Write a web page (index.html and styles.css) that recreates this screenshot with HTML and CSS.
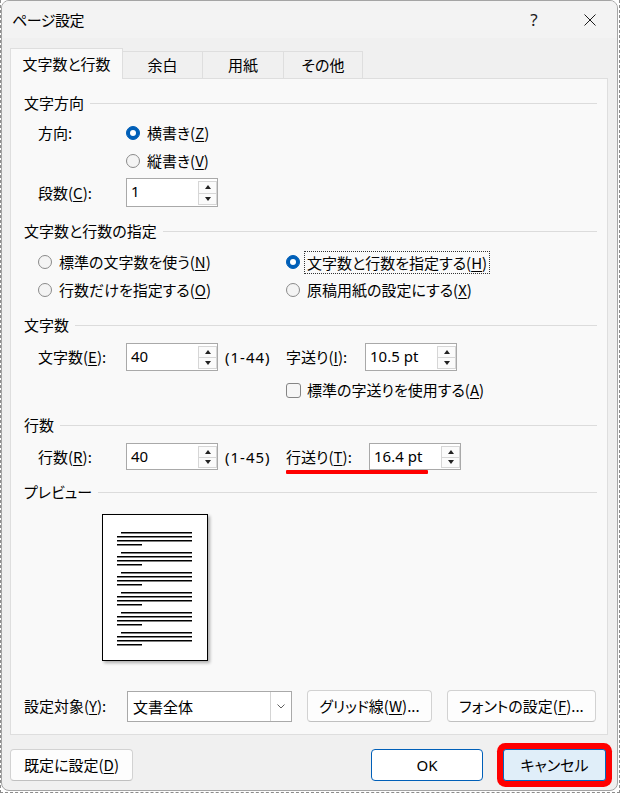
FILE: index.html
```html
<!doctype html>
<html lang="ja">
<head>
<meta charset="utf-8">
<title>ページ設定</title>
<link rel="stylesheet" href="styles.css">
</head>
<body>
<div class="desk">
	<div class="dlg">
		<div class="titlebar">
			<span class="ttl">ページ設定</span>
			<span class="help">?</span>
			<span class="close"><svg width="12" height="12" viewBox="0 0 12 12"><path d="M0.5 0.5L11.5 11.5M11.5 0.5L0.5 11.5" stroke="#1b1b1b" stroke-width="1"/></svg></span>
		</div>
		<div class="tabs">
			<div class="tab on">文字数と行数</div>
			<div class="tab">余白</div>
			<div class="tab">用紙</div>
			<div class="tab">その他</div>
		</div>
		<div class="panel">
			<div class="grp g1">文字方向</div>
			<div class="row r_dir">
				<span class="lbl">方向:</span>
				<span class="opt"><i class="radio on"></i>横書き(<u>Z</u>)</span>
			</div>
			<div class="row r_tate">
				<span class="opt"><i class="radio"></i>縦書き(<u>V</u>)</span>
			</div>
			<div class="row r_dan">
				<span class="lbl">段数(<u>C</u>):</span>
				<div class="spin tall"><span class="val">1</span><span class="arr"><b class="up"></b><b class="dn"></b></span></div>
			</div>

			<div class="grp g2">文字数と行数の指定</div>
			<div class="row r_opt1">
				<span class="opt col"><i class="radio"></i>標準の文字数を使う(<u>N</u>)</span>
				<span class="opt"><i class="radio on"></i><span class="focus">文字数と行数を指定する(<u>H</u>)</span></span>
			</div>
			<div class="row">
				<span class="opt col"><i class="radio"></i>行数だけを指定する(<u>O</u>)</span>
				<span class="opt"><i class="radio"></i>原稿用紙の設定にする(<u>X</u>)</span>
			</div>

			<div class="grp g3">文字数</div>
			<div class="row r_num">
				<span class="lbl">文字数(<u>E</u>):</span>
				<div class="spin"><span class="val">40</span><span class="arr"><b class="up"></b><b class="dn"></b></span></div>
				<span class="rng">(1-44)</span>
				<span class="lbl2">字送り(<u>I</u>):</span>
				<div class="spin"><span class="val">10.5 pt</span><span class="arr"><b class="up"></b><b class="dn"></b></span></div>
			</div>
			<div class="row r_chk">
				<span class="opt"><i class="chk"></i>標準の字送りを使用する(<u>A</u>)</span>
			</div>

			<div class="grp g3">行数</div>
			<div class="row r_num r_line">
				<span class="lbl">行数(<u>R</u>):</span>
				<div class="spin"><span class="val">40</span><span class="arr"><b class="up"></b><b class="dn"></b></span></div>
				<span class="rng">(1-45)</span>
				<span class="lbl3">行送り(<u>T</u>):</span>
				<div class="spin"><span class="val">16.4 pt</span><span class="arr"><b class="up"></b><b class="dn"></b></span></div>
				<span class="mark"></span>
			</div>

			<div class="grp g5">プレビュー</div>
			<div class="pv">
				<div class="page">
					<svg width="104" height="145" viewBox="0 0 104 145">
						<g fill="#000">
							<rect x="18" y="17" width="71" height="1.5"/><rect x="14" y="21" width="75" height="1.5"/><rect x="14" y="25" width="75" height="1.5"/><rect x="14" y="29" width="25" height="1.5"/>
							<rect x="18" y="37" width="71" height="1.5"/><rect x="14" y="41" width="75" height="1.5"/><rect x="14" y="45" width="75" height="1.5"/><rect x="14" y="49" width="25" height="1.5"/>
							<rect x="18" y="57" width="71" height="1.5"/><rect x="14" y="61" width="75" height="1.5"/><rect x="14" y="65" width="75" height="1.5"/><rect x="14" y="69" width="25" height="1.5"/>
							<rect x="18" y="77" width="71" height="1.5"/><rect x="14" y="81" width="75" height="1.5"/><rect x="14" y="85" width="75" height="1.5"/><rect x="14" y="89" width="25" height="1.5"/>
							<rect x="18" y="97" width="71" height="1.5"/><rect x="14" y="101" width="75" height="1.5"/><rect x="14" y="105" width="75" height="1.5"/><rect x="14" y="109" width="25" height="1.5"/>
							<rect x="18" y="117" width="71" height="1.5"/><rect x="14" y="121" width="75" height="1.5"/><rect x="14" y="125" width="75" height="1.5"/><rect x="14" y="129" width="25" height="1.5"/>
						</g>
					</svg>
				</div>
			</div>

			<div class="row r_apply">
				<span class="lbl4">設定対象(<u>Y</u>):</span>
				<div class="combo"><span class="val">文書全体</span><span class="drop"><svg width="8" height="5" viewBox="0 0 8 5"><path d="M0.5 0.5L4 4L7.5 0.5" fill="none" stroke="#606060" stroke-width="1"/></svg></span></div>
				<span class="btn b_grid">グリッド線(<u>W</u>)...</span>
				<span class="btn b_font">フォントの設定(<u>F</u>)...</span>
			</div>
		</div>
		<div class="foot">
			<span class="btn b_def">既定に設定(<u>D</u>)</span>
			<span class="btn b_ok">OK</span>
			<span class="btn b_cancel">キャンセル</span>
		</div>
	</div>
</div>
</body>
</html>
```

FILE: styles.css
```css
*{margin:0; padding:0; box-sizing:border-box;}
body{background:#fff; font-family:"Noto Sans CJK JP", sans-serif; font-size:15px; color:#000; font-feature-settings:"palt";}
u{text-decoration:underline; text-underline-offset:2px;}

.desk{width:620px; height:793px; border:1px dashed #8c8c8c; border-top:0; padding:0 1px 1px 0;}
.dlg{width:617px; height:791px; background:#f0f0f0; border:1px solid #a4a4a4; border-radius:8px; overflow:hidden;}

.titlebar{height:37px; display:flex; align-items:center; padding-left:10px; background:#f3f3f3;}
.titlebar .ttl{flex:1; line-height:37px; letter-spacing:-0.5px;}
.titlebar .help{width:46px; text-align:center; font-family:"Noto Sans", sans-serif; font-size:17px; line-height:37px; color:#1b1b1b;}
.titlebar .close{width:46px; margin:0 4px 0 10px; display:flex; justify-content:center; align-items:center;}

.tabs{display:flex; align-items:flex-end; height:30px; margin-top:10px; padding-left:8px; position:relative; z-index:1;}
.tab{height:27px; margin-left:-1px; border:1px solid #dedede; border-bottom:0; background:#f0f0f0; text-align:center; line-height:26px;}
.tab:nth-child(1){width:113px; margin-left:0;}
.tab:nth-child(2){width:81px;}
.tab:nth-child(3){width:82px;}
.tab:nth-child(4){width:80px;}
.tab.on{height:31px; margin-bottom:-1px; background:#f9f9f9; line-height:30px;}

.panel{width:598px; height:657px; margin-left:8px; border:1px solid #dedede; background:#f9f9f9; display:flex; flex-direction:column; padding-bottom:12px;}

.grp{display:flex; align-items:center; height:22px; padding:0 10px 0 13px; line-height:22px;}
.grp::after{content:""; flex:1; height:1px; background:#dcdcdc; margin-left:6px;}
.g1{margin-top:13px;}
.g2{margin-top:13px;}
.g3{margin-top:10px;}
.g5{margin-top:11px;}

.row{display:flex; align-items:center; height:28px; padding-left:27px; line-height:22px; white-space:nowrap;}
.lbl{width:88px;}
.r_dir{margin-top:5px;}
.r_tate{padding-left:115px;}
.r_dan{margin-top:3px; height:29px;}
.r_opt1{margin-top:6px;}
.r_num{margin-top:7px;}
.r_chk{margin-top:5px; padding-left:275px;}
.r_line{height:27px; position:relative;}

.opt{display:flex; align-items:center;}
.opt.col{width:248px;}
.radio{display:inline-block; width:14px; height:14px; border:1px solid #8a8a8a; border-radius:50%; background:#f4f4f4; margin-right:7px; position:relative;}
.radio.on{background:#005fb8; border-color:#005fb8;}
.radio.on::after{content:""; position:absolute; left:3px; top:3px; width:6px; height:6px; border-radius:50%; background:#fff;}
.focus{border:1px dotted #333; padding:0 2px; margin-left:-3px; line-height:21px;}
.chk{display:inline-block; width:15px; height:15px; border:1px solid #858585; border-radius:3px; background:#f6f6f6; margin-right:6px;}

.spin{display:flex; width:92px; height:28px; border:1px solid #a9a9a9; background:#fff;}
.spin.tall{height:29px;}
.r_line .spin{height:27px;}
.spin .val{flex:1; padding-left:4px; line-height:25px; font-family:"Noto Sans", sans-serif; font-size:15px;}
.spin .arr{width:19px; margin:2px 0 1px; display:flex; flex-direction:column; border:1px solid #d6d6d6; background:#fbfbfb;}
.spin .arr b{flex:1; display:flex; align-items:center; justify-content:center;}
.spin .arr .dn{border-top:1px solid #d6d6d6;}
.spin .arr .up::before{content:""; border-left:3.5px solid transparent; border-right:3.5px solid transparent; border-bottom:4px solid #222;}
.spin .arr .dn::before{content:""; border-left:3.5px solid transparent; border-right:3.5px solid transparent; border-top:4px solid #222;}
.rng{width:61px; margin-left:7px; font-family:"Noto Sans", sans-serif; letter-spacing:1px;}
.lbl2{width:79px;}
.lbl3{width:83px;}
.mark{position:absolute; left:275px; top:27px; width:142px; height:4px; background:#f00; border-radius:1px;}

.pv{margin-top:11px; padding-left:91px;}
.page{width:106px; height:147px; border:1px solid #000; background:#fff; box-shadow:2px 2px 3px rgba(0,0,0,.3);}
.page svg{display:block;}

.r_apply{margin-top:auto; height:32px; padding-left:13px;}
.lbl4{width:103px;}
.combo{display:flex; width:165px; height:31px; border:1px solid #a9a9a9; background:#fff;}
.combo .val{flex:1; padding-left:5px; line-height:29px;}
.combo .drop{width:21px; border-left:1px solid #d4d4d4; display:flex; align-items:center; justify-content:center;}

.btn{display:inline-block; height:32px; line-height:30px; text-align:center; border:1px solid #d2d2d2; border-bottom-color:#c0c0c0; border-radius:4px; background:#fdfdfd; font-size:15px;}
.b_grid{width:125px; margin-left:15px;}
.b_font{width:149px; margin-left:15px;}

.foot{display:flex; margin-top:14px; padding-left:8px;}
.b_def{width:123px;}
.b_ok{width:112px; margin-left:auto; border:1px solid #005fb8; background:#fff; font-family:"Noto Sans", sans-serif;}
.b_cancel{width:103px; margin:0 11px 0 20px; border:1px solid #0067c0; background:#e0eef9; border-radius:3px; box-shadow:0 0 0 6px #f00;}
```
